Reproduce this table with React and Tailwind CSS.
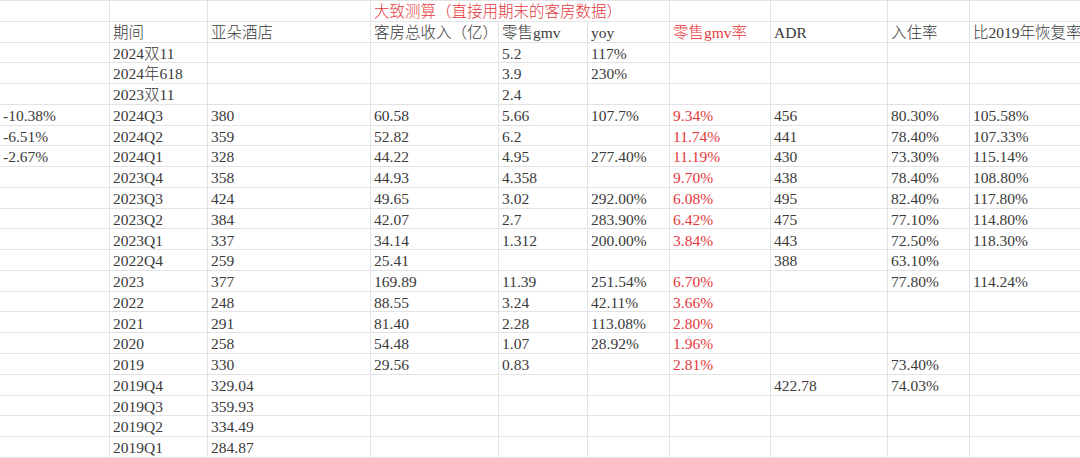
import React from 'react';

// column widths (px), left to right
const widths = [110, 98, 163, 128, 89, 82, 101, 117, 82, 110];
const RED_COL = 6;

const rows = [
  ['', '期间', '亚朵酒店', '客房总收入（亿）', '零售gmv', 'yoy', '零售gmv率', 'ADR', '入住率', '比2019年恢复率'],
  ['', '2024双11', '', '', '5.2', '117%', '', '', '', ''],
  ['', '2024年618', '', '', '3.9', '230%', '', '', '', ''],
  ['', '2023双11', '', '', '2.4', '', '', '', '', ''],
  ['-10.38%', '2024Q3', '380', '60.58', '5.66', '107.7%', '9.34%', '456', '80.30%', '105.58%'],
  ['-6.51%', '2024Q2', '359', '52.82', '6.2', '', '11.74%', '441', '78.40%', '107.33%'],
  ['-2.67%', '2024Q1', '328', '44.22', '4.95', '277.40%', '11.19%', '430', '73.30%', '115.14%'],
  ['', '2023Q4', '358', '44.93', '4.358', '', '9.70%', '438', '78.40%', '108.80%'],
  ['', '2023Q3', '424', '49.65', '3.02', '292.00%', '6.08%', '495', '82.40%', '117.80%'],
  ['', '2023Q2', '384', '42.07', '2.7', '283.90%', '6.42%', '475', '77.10%', '114.80%'],
  ['', '2023Q1', '337', '34.14', '1.312', '200.00%', '3.84%', '443', '72.50%', '118.30%'],
  ['', '2022Q4', '259', '25.41', '', '', '', '388', '63.10%', ''],
  ['', '2023', '377', '169.89', '11.39', '251.54%', '6.70%', '', '77.80%', '114.24%'],
  ['', '2022', '248', '88.55', '3.24', '42.11%', '3.66%', '', '', ''],
  ['', '2021', '291', '81.40', '2.28', '113.08%', '2.80%', '', '', ''],
  ['', '2020', '258', '54.48', '1.07', '28.92%', '1.96%', '', '', ''],
  ['', '2019', '330', '29.56', '0.83', '', '2.81%', '', '73.40%', ''],
  ['', '2019Q4', '329.04', '', '', '', '', '422.78', '74.03%', ''],
  ['', '2019Q3', '359.93', '', '', '', '', '', '', ''],
  ['', '2019Q2', '334.49', '', '', '', '', '', '', ''],
  ['', '2019Q1', '284.87', '', '', '', '', '', '', ''],
];

function Cell({ w, children, red, last }) {
  return (
    <div
      className={
        'h-full shrink-0 flex items-center pt-[2px] pl-[3px] whitespace-nowrap ' +
        (last ? '' : 'border-r border-[#e3e3e3] ') +
        (red ? 'text-[#e5383c]' : 'text-[#3a3a3a]')
      }
      style={{ width: w }}
    >
      {children}
    </div>
  );
}

export default function App() {
  return (
    <div
      className="w-[1080px] h-[458px] overflow-hidden bg-white border-t border-[#e3e3e3] text-[15.5px] leading-none font-light"
      style={{ fontFamily: '"Liberation Serif", "Noto Sans CJK SC", serif' }}
    >
      {/* title row */}
      <div className="flex h-[20.77px] border-b border-[#e3e3e3]">
        <Cell w={110} />
        <Cell w={98} />
        <Cell w={163} />
        <Cell w={299} red>
          大致测算（直接用期末的客房数据）
        </Cell>
        <Cell w={101} />
        <Cell w={117} />
        <Cell w={82} />
        <Cell w={110} last />
      </div>

      {rows.map((r, i) => (
        <div key={i} className="flex h-[20.77px] border-b border-[#e3e3e3]">
          {r.map((v, j) => (
            <Cell key={j} w={widths[j]} red={j === RED_COL} last={j === widths.length - 1}>
              {v}
            </Cell>
          ))}
        </div>
      ))}
    </div>
  );
}
